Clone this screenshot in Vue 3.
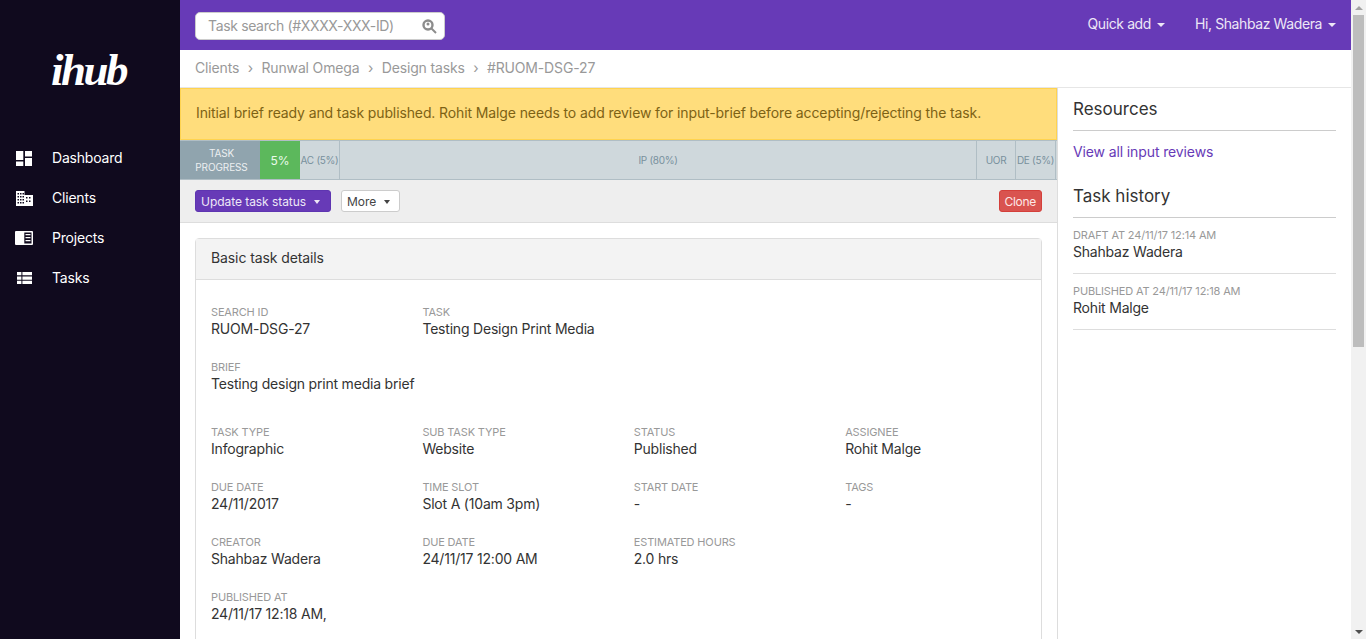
<script setup>
const crumbs = ['Clients', 'Runwal Omega', 'Design tasks']
const rows = [
  [{ l: 'SEARCH ID', v: 'RUOM-DSG-27' }, { l: 'TASK', v: 'Testing Design Print Media' }],
  [{ l: 'BRIEF', v: 'Testing design print media brief' }],
  [{ l: 'TASK TYPE', v: 'Infographic' }, { l: 'SUB TASK TYPE', v: 'Website' }, { l: 'STATUS', v: 'Published' }, { l: 'ASSIGNEE', v: 'Rohit Malge' }],
  [{ l: 'DUE DATE', v: '24/11/2017' }, { l: 'TIME SLOT', v: 'Slot A (10am 3pm)' }, { l: 'START DATE', v: '-' }, { l: 'TAGS', v: '-' }],
  [{ l: 'CREATOR', v: 'Shahbaz Wadera' }, { l: 'DUE DATE', v: '24/11/17 12:00 AM' }, { l: 'ESTIMATED HOURS', v: '2.0 hrs' }],
  [{ l: 'PUBLISHED AT', v: '24/11/17 12:18 AM,' }],
]
const history = [
  { l: 'DRAFT AT 24/11/17 12:14 AM', v: 'Shahbaz Wadera' },
  { l: 'PUBLISHED AT 24/11/17 12:18 AM', v: 'Rohit Malge' },
]
</script>

<template>
  <div class="app">
    <aside class="side">
      <div class="logo">ihub</div>
      <nav class="nav">
        <a class="nav-item"><span class="ico"><svg width="16" height="15" viewBox="0 0 16 15"><path fill="#fff" d="M0 0h7.300v9H0zM9 0h7v5.500H9zM0 10.500h7.300V15H0zM9 7h7v8H9z"/></svg></span><span class="txt">Dashboard</span></a>
        <a class="nav-item"><span class="ico"><svg width="17" height="15" viewBox="0 0 17 15"><path fill="#fff" fill-rule="evenodd" d="M0 0h8.500v4H17v11H0zM1.500 2v1.500H3V2zM4 2v1.500h1.500V2zM6.500 2v1.500H8V2zM1.500 5v1.500H3V5zM4 5v1.500h1.500V5zM6.500 5v1.500H8V5zM1.500 8v1.500H3V8zM4 8v1.500h1.500V8zM6.500 8v1.500H8V8zM1.500 11v1.500H3V11zM4 11v1.500h1.500V11zM6.500 11v1.500H8V11zM10 6v1.500h1.500V6zM13 6v1.500h1.500V6zM10 9.500V11h1.500V9.500zM13 9.500V11h1.500V9.500z"/></svg></span><span class="txt">Clients</span></a>
        <a class="nav-item"><span class="ico nudge"><svg width="18" height="14" viewBox="0 0 18 14"><path fill="#fff" fill-rule="evenodd" d="M1 0h16a1 1 0 0 1 1 1v12a1 1 0 0 1-1 1H1a1 1 0 0 1-1-1V1a1 1 0 0 1 1-1zM9.300 1.500v11h7.200v-11zM10.500 3h5v1.300h-5zM10.500 6h5v1.300h-5zM10.500 9h5v1.300h-5z"/></svg></span><span class="txt">Projects</span></a>
        <a class="nav-item"><span class="ico indent"><svg width="15" height="12" viewBox="0 0 15 12"><path fill="#fff" d="M0 0h4.400v3.300H0zM5.400 0H15v3.300H5.400zM0 4.400h4.400v3.300H0zM5.400 4.400H15v3.300H5.400zM0 8.700h4.400V12H0zM5.400 8.700H15V12H5.400z"/></svg></span><span class="txt">Tasks</span></a>
      </nav>
    </aside>
    <div class="main">
      <header class="top">
        <div class="search">
          <span class="ph">Task search (#XXXX-XXX-ID)</span>
          <svg width="15" height="15" viewBox="0 0 15 15"><circle cx="6" cy="6" r="4.500" fill="none" stroke="#8c8c8c" stroke-width="2.400"/><circle cx="6" cy="5" r="1.500" fill="#8c8c8c"/><path d="M9.500 9.500L14 14" stroke="#8c8c8c" stroke-width="2"/></svg>
        </div>
        <div class="top-right">
          <span class="top-link">Quick add<i class="caret"></i></span>
          <span class="top-link">Hi, Shahbaz Wadera<i class="caret"></i></span>
        </div>
      </header>
      <div class="crumbs">
        <template v-for="c in crumbs" :key="c"><span>{{ c }}</span><span class="sep">›</span></template>
        <span>#RUOM-DSG-27</span>
      </div>
      <div class="split">
        <section class="content">
          <div class="alert">Initial brief ready and task published. Rohit Malge needs to add review for input-brief before accepting/rejecting the task.</div>
          <div class="progress">
            <div class="p-label">TASK<br>PROGRESS</div>
            <div class="p-done">5%</div>
            <div class="p-seg w40">AC (5%)</div>
            <div class="p-seg grow">IP (80%)</div>
            <div class="p-seg w39">UOR</div>
            <div class="p-seg w40">DE (5%)</div>
          </div>
          <div class="toolbar">
            <button class="btn primary">Update task status<i class="caret small"></i></button>
            <button class="btn plain">More<i class="caret small"></i></button>
            <button class="btn danger">Clone</button>
          </div>
          <div class="body">
            <div class="card">
              <div class="card-head">Basic task details</div>
              <div class="card-body">
                <div v-for="(r, i) in rows" :key="i" class="row" :class="{ gap: i === 1 }">
                  <div v-for="f in r" :key="f.l" class="field" :class="{ wide: r.length === 1 }">
                    <div class="lab">{{ f.l }}</div>
                    <div class="val">{{ f.v }}</div>
                  </div>
                </div>
              </div>
            </div>
          </div>
        </section>
        <aside class="res">
          <h3>Resources</h3>
          <a class="link">View all input reviews</a>
          <h3>Task history</h3>
          <div v-for="h in history" :key="h.l" class="hist">
            <div class="lab">{{ h.l }}</div>
            <div class="val">{{ h.v }}</div>
          </div>
        </aside>
      </div>
    </div>
    <div class="scrollbar">
      <div class="arrow"><i class="tri up"></i></div>
      <div class="thumb"></div>
      <div class="track"></div>
      <div class="arrow"><i class="tri down"></i></div>
    </div>
  </div>
</template>

<style>
html, body { margin: 0; overflow: hidden; }
</style>

<style scoped>
.app { display: flex; height: 639px; overflow: hidden; font-family: Inter, "Noto Sans", sans-serif; font-size: 14px; color: #333; background: #fff; }
.side { width: 180px; flex: none; background: #100a1e; color: #fff; }
.logo { height: 138px; box-sizing: border-box; padding: 44px 3px 0 0; text-align: center; font: italic 700 45px "Liberation Serif", serif; letter-spacing: -2.500px; }
.nav { display: flex; flex-direction: column; }
.nav-item { height: 40px; display: flex; align-items: center; padding-left: 16px; letter-spacing: -0.2px; }
.ico { width: 36px; flex: none; display: flex; align-items: center; }
.ico.indent { padding-left: 1px; width: 35px; }
.ico.nudge { margin-left: -1px; width: 37px; }
.txt { margin-top: -2px; }
.main { flex: 1; min-width: 0; display: flex; flex-direction: column; }
.top { height: 50px; flex: none; box-sizing: border-box; background: #673ab7; display: flex; align-items: flex-start; justify-content: space-between; padding: 12px 15px 0 15px; }
.search { width: 250px; height: 28px; box-sizing: border-box; background: #fff; border-radius: 5px; border: 1px solid #ccc; display: flex; align-items: center; justify-content: space-between; padding: 0 7px 2px 12px; color: #999; }
.ph { letter-spacing: -0.35px; }
.search svg { margin-top: 2px; }
.top-right { display: flex; gap: 30px; color: #ede7f6; letter-spacing: -0.4px; margin-top: 3px; }
.caret { display: inline-block; border-left: 4px solid transparent; border-right: 4px solid transparent; border-top: 4px solid currentColor; margin-left: 6px; vertical-align: middle; }
.caret.small { margin-left: 8px; border-left-width: 3.500px; border-right-width: 3.500px; }
.crumbs { height: 38px; box-sizing: border-box; padding: 0 0 3px 15px; flex: none; display: flex; align-items: center; gap: 8.500px; color: #999; border-bottom: 1px solid #e6e6e6; letter-spacing: -0.15px; }
.split { flex: 1; display: flex; min-height: 0; }
.content { width: 878px; box-sizing: border-box; flex: none; border-right: 1px solid #ddd; }
.alert { height: 52px; box-sizing: border-box; padding: 0 0 3px 15px; display: flex; align-items: center; background: #ffdd7c; border: 1px solid #ffd34f; color: #7d6215; letter-spacing: -0.115px; }
.progress { height: 40px; display: flex; box-sizing: border-box; background: #cfd8dc; border-top: 1px solid #b0bec5; border-bottom: 1px solid #b0bec5; font-size: 10px; padding-right: 1px; }
.p-label { width: 80px; box-sizing: border-box; background: #90a4ae; color: #eceff1; text-align: center; line-height: 14px; padding: 5px 0 0 3px; letter-spacing: -0.1px; }
.p-done { width: 40px; background: #5cb85c; color: #eafaea; display: flex; align-items: center; justify-content: center; font-size: 12px; }
.p-seg { display: flex; align-items: center; justify-content: center; color: #78909c; border-right: 1px solid #b0bec5; box-sizing: border-box; white-space: nowrap; letter-spacing: -0.3px; }
.w40 { width: 40px; }
.w39 { width: 39px; }
.grow { flex: 1; }
.toolbar { height: 43px; box-sizing: border-box; background: #eee; border-bottom: 1px solid #ddd; display: flex; align-items: center; gap: 10px; padding: 0 15px; }
.btn { height: 22px; font: inherit; font-size: 12px; border-radius: 3px; border: 1px solid; padding: 0 10px 0 5px; letter-spacing: -0.05px; }
.primary { background: #673ab7; border-color: #5e35b1; color: #ede7f6; }
.plain { background: #fff; border-color: #ccc; color: #444; padding-right: 9px; }
.danger { background: #d9534f; border-color: #d43f3a; color: #fde8e7; margin-left: auto; padding: 0 5px; letter-spacing: -0.3px; }
.body { padding: 15px; }
.card { border: 1px solid #ddd; border-radius: 4px; }
.card-head { height: 41px; box-sizing: border-box; padding: 0 0 3px 15px; display: flex; align-items: center; background: #f3f3f3; border-bottom: 1px solid #ddd; letter-spacing: -0.1px; }
.card-body { padding: 24px 15px 0; }
.row { display: grid; grid-template-columns: repeat(4, 211.400px); height: 55px; }
.row.gap { height: 65px; }
.field.wide { grid-column: span 4; }
.lab { font-size: 11px; line-height: 16px; color: #999; letter-spacing: -0.15px; }
.val { font-size: 14px; line-height: 18px; color: #333; letter-spacing: -0.2px; }
.res { flex: 1; min-width: 0; padding: 0 15px; }
.res h3 { margin: 0; font-weight: 400; font-size: 17px; height: 43px; box-sizing: border-box; line-height: 42px; border-bottom: 1px solid #ccc; }
.link { display: block; color: #673ab7; height: 44px; line-height: 42px; letter-spacing: -0.12px; }
.hist { height: 56px; box-sizing: border-box; border-bottom: 1px solid #ddd; padding-top: 9px; }
.scrollbar { width: 15px; flex: none; background: #f1f1f1; display: flex; flex-direction: column; }
.arrow { height: 15px; flex: none; display: flex; align-items: center; justify-content: center; }
.thumb { margin: 0 2px; height: 332px; flex: none; background: #bdbdbd; }
.track { flex: 1; }
.tri { display: block; border-left: 4px solid transparent; border-right: 4px solid transparent; }
.tri.up { border-bottom: 4px solid #a3a3a3; }
.tri.down { border-top: 4px solid #505050; }
</style>
